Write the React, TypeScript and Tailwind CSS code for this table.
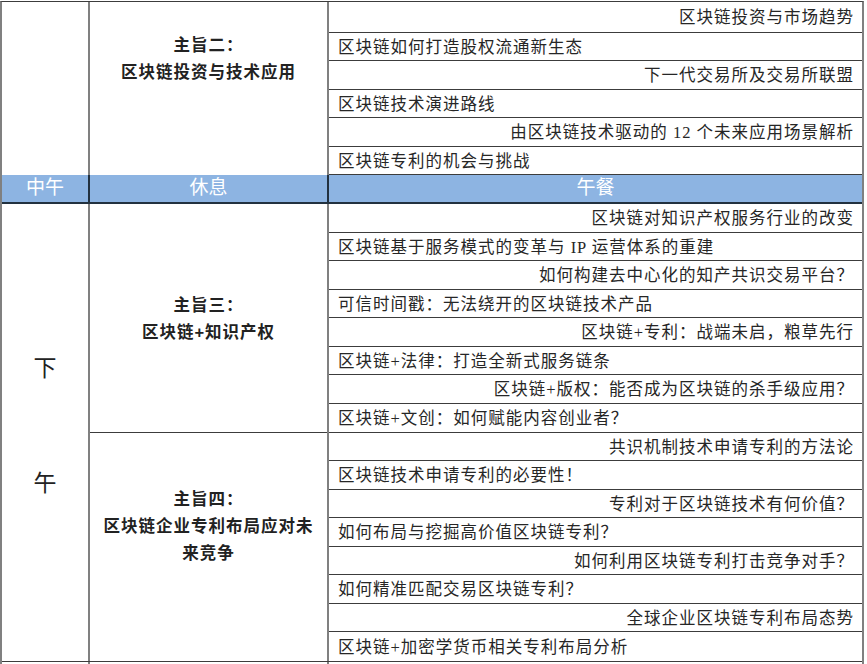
import React from "react";

type Row = { t: string; r: boolean; h: number };

const topRows: Row[] = [
  { t: "区块链投资与市场趋势", r: true, h: 31 },
  { t: "区块链如何打造股权流通新生态", r: false, h: 28 },
  { t: "下一代交易所及交易所联盟", r: true, h: 29 },
  { t: "区块链技术演进路线", r: false, h: 28 },
  { t: "由区块链技术驱动的 12 个未来应用场景解析", r: true, h: 29 },
  { t: "区块链专利的机会与挑战", r: false, h: 28 },
];

const bRows: Row[] = [
  { t: "区块链对知识产权服务行业的改变", r: true, h: 29 },
  { t: "区块链基于服务模式的变革与 IP 运营体系的重建", r: false, h: 28 },
  { t: "如何构建去中心化的知产共识交易平台？", r: true, h: 29 },
  { t: "可信时间戳：无法绕开的区块链技术产品", r: false, h: 28 },
  { t: "区块链+专利：战端未启，粮草先行", r: true, h: 29 },
  { t: "区块链+法律：打造全新式服务链条", r: false, h: 28 },
  { t: "区块链+版权：能否成为区块链的杀手级应用？", r: true, h: 29 },
  { t: "区块链+文创：如何赋能内容创业者？", r: false, h: 29 },
];

const cRows: Row[] = [
  { t: "共识机制技术申请专利的方法论", r: true, h: 28 },
  { t: "区块链技术申请专利的必要性！", r: false, h: 29 },
  { t: "专利对于区块链技术有何价值？", r: true, h: 28 },
  { t: "如何布局与挖掘高价值区块链专利？", r: false, h: 29 },
  { t: "如何利用区块链专利打击竞争对手？", r: true, h: 28 },
  { t: "如何精准匹配交易区块链专利？", r: false, h: 29 },
  { t: "全球企业区块链专利布局态势", r: true, h: 28 },
  { t: "区块链+加密学货币相关专利布局分析", r: false, h: 29 },
];

const serif = { fontFamily: '"Liberation Serif", "Noto Sans CJK SC", serif' };
const sans = { fontFamily: '"Liberation Sans", "Noto Sans CJK SC", sans-serif' };

function Rows({ rows, lastBorder = true }: { rows: Row[]; lastBorder?: boolean }) {
  return (
    <div className="flex flex-col w-[533px]">
      {rows.map((row, i) => (
        <div
          key={i}
          style={{ height: row.h, ...serif }}
          className={
            (i === rows.length - 1 && !lastBorder ? "" : "border-b border-[#3c3c3c] ") +
            "flex items-center pt-[3px] text-[16.5px] tracking-[1px] text-[#262626] whitespace-nowrap " +
            (row.r ? "justify-end pr-[8px]" : "justify-start pl-[9px]")
          }
        >
          {row.t}
        </div>
      ))}
    </div>
  );
}

function Theme({ lines }: { lines: string[] }) {
  return (
    <div
      style={sans}
      className="flex flex-col items-center font-bold text-[16.5px] tracking-[1px] leading-[27px] text-[#222] whitespace-nowrap"
    >
      {lines.map((l, i) => (
        <div key={i}>{l}</div>
      ))}
    </div>
  );
}

export default function App() {
  return (
    <div className="bg-white w-[867px] h-[664px] overflow-hidden">
      <div className="mt-[1px] w-[864px] border-t border-[#3c3c3c] border-l-2 border-r-2 border-l-[#808080] border-r-[#808080]">
        {/* Section A */}
        <div className="flex h-[173px]">
          <div className="w-[88px] border-r-2 border-[#808080]" />
          <div className="w-[239px] border-r-2 border-[#808080] pt-[30px]">
            <Theme lines={["主旨二：", "区块链投资与技术应用"]} />
          </div>
          <Rows rows={topRows} />
        </div>

        {/* Lunch row */}
        <div
          style={sans}
          className="flex h-[29px] bg-[#8db4e2] border-b-2 border-[#22313f] text-white text-[19px]"
        >
          <div className="w-[88px] border-r-2 border-[#22313f] flex items-center justify-center">中午</div>
          <div className="w-[239px] border-r-2 border-[#22313f] flex items-center justify-center">休息</div>
          <div className="flex-1 flex items-center justify-center">午餐</div>
        </div>

        {/* Section B */}
        <div className="flex border-b border-[#3c3c3c]">
          <div
            style={sans}
            className="w-[88px] border-r-2 border-[#808080] flex flex-col items-center pt-[153px] text-[23px] leading-[22px] text-[#222]"
          >
            <div>下</div>
            <div className="mt-[93px]">午</div>
          </div>
          <div className="w-[239px] border-r-2 border-[#808080] flex flex-col">
            <div className="h-[229px] border-b border-[#3c3c3c] flex items-center justify-center pt-[2px]">
              <Theme lines={["主旨三：", "区块链+知识产权"]} />
            </div>
            <div className="h-[227px] pt-[53px]">
              <Theme lines={["主旨四：", "区块链企业专利布局应对未", "来竞争"]} />
            </div>
          </div>
          <div className="flex flex-col">
            <Rows rows={bRows} />
            <Rows rows={cRows} lastBorder={false} />
          </div>
        </div>

        {/* Tail */}
        <div className="flex h-[10px]">
          <div className="w-[88px] border-r-2 border-[#808080]" />
          <div className="w-[239px] border-r-2 border-[#808080]" />
          <div className="flex-1" />
        </div>
      </div>
    </div>
  );
}
